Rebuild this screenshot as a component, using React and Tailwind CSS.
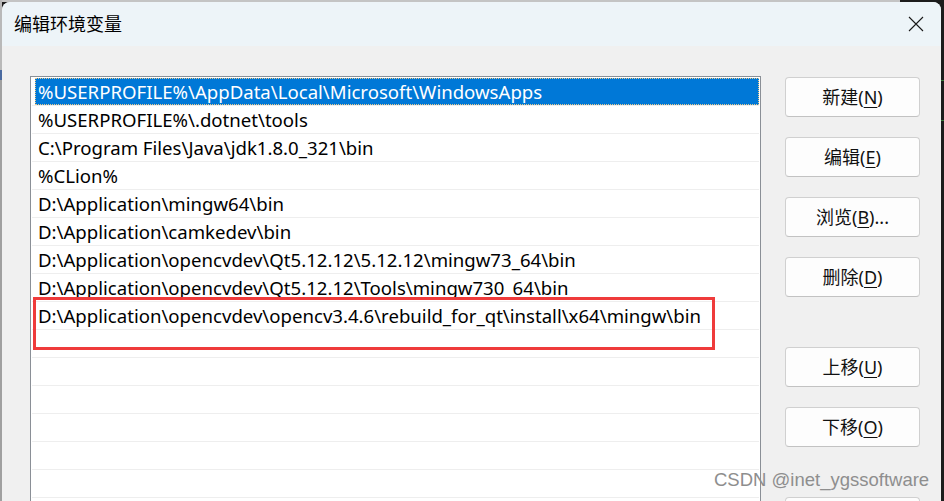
import React from "react";

const rows = [
  "%USERPROFILE%\\AppData\\Local\\Microsoft\\WindowsApps",
  "%USERPROFILE%\\.dotnet\\tools",
  "C:\\Program Files\\Java\\jdk1.8.0_321\\bin",
  "%CLion%",
  "D:\\Application\\mingw64\\bin",
  "D:\\Application\\camkedev\\bin",
  "D:\\Application\\opencvdev\\Qt5.12.12\\5.12.12\\mingw73_64\\bin",
  "D:\\Application\\opencvdev\\Qt5.12.12\\Tools\\mingw730_64\\bin",
  "D:\\Application\\opencvdev\\opencv3.4.6\\rebuild_for_qt\\install\\x64\\mingw\\bin",
  "",
  "",
  "",
  "",
  "",
  "",
];

function Btn({ label, k, tail = ")" }) {
  return (
    <button className="w-[135px] h-[40px] shrink-0 rounded-[4px] border border-[#d0d0d0] border-b-[#c2c2c2] bg-[#fdfdfd] text-[18px] text-[#111] flex items-center justify-center leading-none">
      {label ? (
        <span>
          {label}(<span className="underline underline-offset-[3px] decoration-1">{k}</span>{tail}
        </span>
      ) : null}
    </button>
  );
}

export default function App() {
  return (
    <div
      className="w-[944px] h-[501px] overflow-hidden relative bg-[#1c1c1c] flex"
      style={{ fontFamily: '"Noto Sans", "Noto Sans CJK SC", sans-serif' }}
    >
      <div className="w-[2px] h-full bg-[#a6a6a6] flex flex-col shrink-0">
        <div className="h-[70px] bg-[#b9b9b9]" />
        <div className="h-[10px] bg-[#4a6aa0]" />
        <div className="flex-1 bg-[#a0a0a0]" />
      </div>
      <div className="w-[939px] shrink-0 flex flex-col">
        <div className="h-[2px] shrink-0 flex">
          <div className="w-[898px] bg-[#c4c4c4]" />
          <div className="flex-1 bg-[#1c1c1c]" />
        </div>
        <div className="flex-1 min-h-0 rounded-t-[8px] bg-[#f0f0f0] overflow-hidden flex flex-col">
          <div className="h-[44px] shrink-0 bg-[#edf4f8] flex items-center justify-between pl-[12px] pr-[16px]">
            <span className="text-[18px] text-black">编辑环境变量</span>
            <svg width="16" height="16" viewBox="0 0 16 16" className="mr-[1px]">
              <path d="M1 1 L15 15 M15 1 L1 15" stroke="#1a1a1a" strokeWidth="1.1" fill="none" />
            </svg>
          </div>
          <div className="flex shrink-0 pl-[28px] pt-[30px] gap-[24px]">
            <div className="w-[731px] h-[480px] border border-[#8a8f96] bg-white pt-[1px] pl-[1px] pr-[1px] shrink-0">
              {rows.map((r, i) => (
                <div key={i} className="h-[28px] border-b border-[#eeeeee] flex">
                  {i === 0 ? (
                    <div className="ml-[3px] flex-1 bg-[#0078d7] text-white pl-[3px] flex items-center text-[18.6px] outline-1 outline-dotted outline-[#e9c98a] -outline-offset-1 whitespace-nowrap">
                      {r}
                    </div>
                  ) : (
                    <div className="pl-[6px] flex items-center text-[18.6px] text-black whitespace-nowrap">{r}</div>
                  )}
                </div>
              ))}
            </div>
            <div className="flex flex-col gap-[20px] pt-[1px]">
              <Btn label="新建" k="N" />
              <Btn label="编辑" k="E" />
              <Btn label="浏览" k="B" tail=")..." />
              <Btn label="删除" k="D" />
              <div className="h-[10px] shrink-0" />
              <Btn label="上移" k="U" />
              <Btn label="下移" k="O" />
              <div className="h-[10px] shrink-0" />
              <Btn />
            </div>
          </div>
        </div>
      </div>
      <div className="flex-1 flex flex-col">
        <div className="h-[80px]" />
        <div className="h-[40px] border-t border-[#3a7a3a]" />
        <div className="h-[40px] border-t border-[#3a7a3a]" />
      </div>
      <div className="absolute left-[33px] top-[297px] w-[682px] h-[53px] border-[3px] border-[#ef3b3b]" />
      <div
        className="absolute left-[714px] top-[471px] text-[18.5px] text-[#8e8e8e] leading-none whitespace-nowrap"
        style={{ fontFamily: '"Liberation Sans", sans-serif' }}
      >
        CSDN @inet_ygssoftware
      </div>
    </div>
  );
}
